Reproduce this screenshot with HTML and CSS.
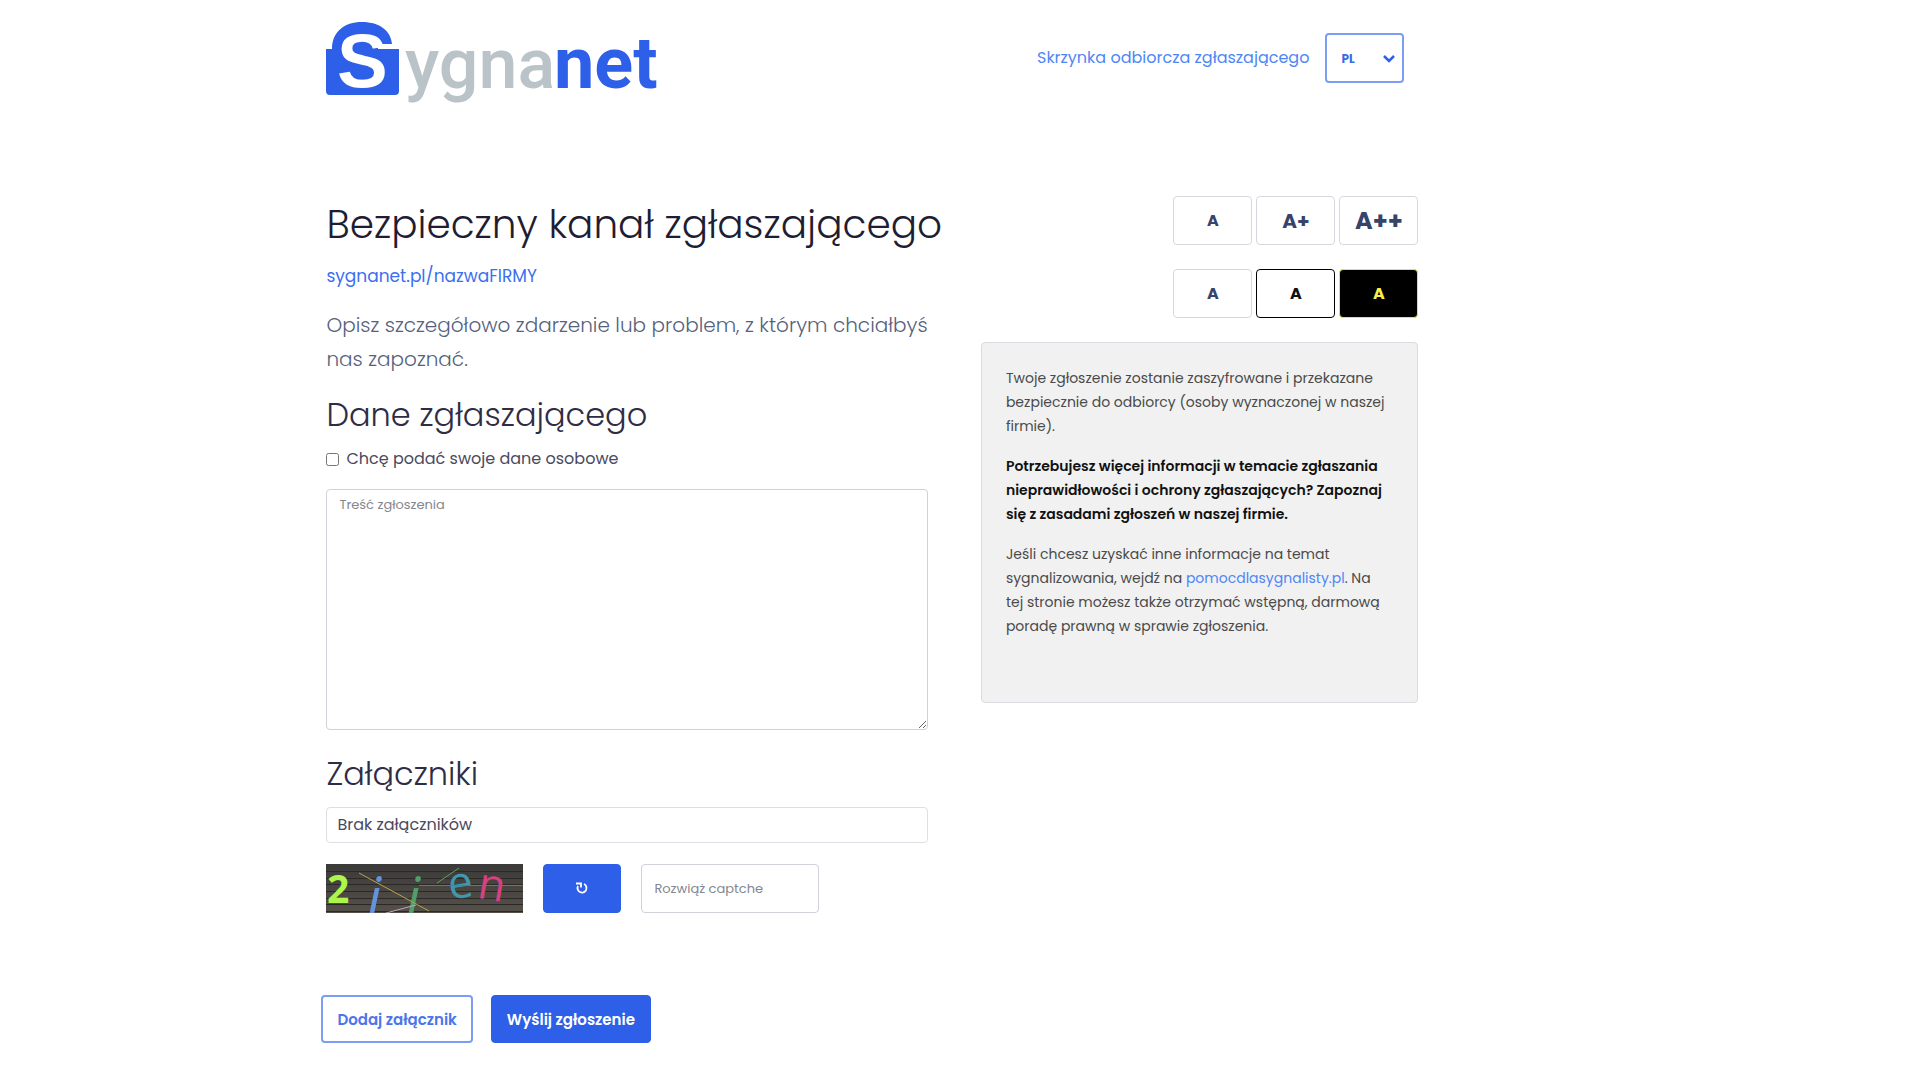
FILE: index.html
```html
<!DOCTYPE html>
<html lang="pl">
<head>
    <meta charset="UTF-8">
    <meta name="viewport" content="width=device-width, initial-scale=1.0">
    <title>Sygnanet - Bezpieczny kanał zgłaszającego</title>
    <link rel="stylesheet" href="styles.css">
</head>
<body>
    <div class="container">

        <header class="header">
            <a href="#" class="logo" aria-label="Sygnanet">
                <svg width="334" height="84" viewBox="0 0 334 84">
                    <path fill="#2d5fe8" d="M0 27h6C6 10 18 0 36 0s29 9 30 22H52v5h21v42q0 4-4 4H4q-4 0-4-4z"/>
                    <text class="logo-s" x="11" y="65">S</text>
                    <text class="logo-text" x="79" y="66">ygna</text>
                    <text class="logo-text logo-net" x="228" y="66">net</text>
                </svg>
            </a>
            <nav class="nav">
                <a href="#">Skrzynka odbiorcza zgłaszającego</a>
                <div class="lang">
                    <select aria-label="Język">
                        <option>PL</option>
                        <option>EN</option>
                    </select>
                    <svg class="chevron" width="12" height="8" viewBox="0 0 12 8"><path d="M1 1l5 5 5-5" fill="none" stroke="#2d5fe8" stroke-width="2.500"/></svg>
                </div>
            </nav>
        </header>

        <main class="main">
            <!-- Report form -->
            <form class="report">
                <h1>Bezpieczny kanał zgłaszającego</h1>
                <a href="#" class="company">sygnanet.pl/nazwaFIRMY</a>
                <p class="lead">Opisz szczegółowo zdarzenie lub problem, z którym chciałbyś nas zapoznać.</p>

                <h2>Dane zgłaszającego</h2>
                <div class="check">
                    <input type="checkbox" id="personal">
                    <label for="personal">Chcę podać swoje dane osobowe</label>
                </div>
                <textarea id="content" aria-label="Treść zgłoszenia" placeholder="Treść zgłoszenia"></textarea>

                <h2>Załączniki</h2>
                <div class="files">Brak załączników</div>

                <div class="captcha">
                    <svg class="captcha-img" width="197" height="49" viewBox="0 0 197 49">
                        <defs>
                            <linearGradient id="bg" x1="0" y1="0" x2="0" y2="1">
                                <stop offset="0" stop-color="#3b3a39"/>
                                <stop offset="1" stop-color="#565049"/>
                            </linearGradient>
                        </defs>
                        <rect width="197" height="49" fill="url(#bg)"/>
                        <path stroke="#2b2927" d="M0 7.500h197M0 14.500h197M0 20.500h197M0 27.500h197M0 34.500h197M0 40.500h197M0 47.500h197"/>
                        <text class="c-two" x="1" y="39">2</text>
                        <text class="c-i" x="41" y="54" fill="#6592dc">i</text>
                        <text class="c-i" x="80" y="54" fill="#4fa067">i</text>
                        <text class="c-e" x="122" y="34" transform="rotate(-8 134 21)">e</text>
                        <text class="c-n" x="152" y="36" transform="rotate(10 165 25)">n</text>
                        <path stroke="#b5a552" d="M33 9l70 38"/>
                        <path stroke="#4f8a5a" d="M93 21.500h104"/>
                        <path stroke="#6a9a5c" d="M111 19l22-15"/>
                        <path stroke="#c3a5c0" d="M60 49l30-8"/>
                    </svg>
                    <button type="button" class="btn refresh" aria-label="Odśwież">
                        <svg width="12" height="12" viewBox="0 0 12 12"><path d="M8 2a4.500 4.500 0 1 1-6 2M0 1.500h5v4" fill="none" stroke="#fff" stroke-width="1.800"/></svg>
                    </button>
                    <input type="text" aria-label="Rozwiąż captche" placeholder="Rozwiąż captche">
                </div>

                <div class="actions">
                    <button type="button" class="btn btn-outline">Dodaj załącznik</button>
                    <button type="submit" class="btn">Wyślij zgłoszenie</button>
                </div>
            </form>

            <!-- Accessibility and info -->
            <aside class="side">
                <div class="tools">
                    <button type="button">A</button>
                    <button type="button" class="size-m">A+</button>
                    <button type="button" class="size-l">A++</button>
                </div>
                <div class="tools">
                    <button type="button">A</button>
                    <button type="button" class="contrast-black">A</button>
                    <button type="button" class="contrast-yellow">A</button>
                </div>
                <div class="info">
                    <p>Twoje zgłoszenie zostanie zaszyfrowane i przekazane bezpiecznie do odbiorcy (osoby wyznaczonej w naszej firmie).</p>
                    <p class="strong">Potrzebujesz więcej informacji w temacie zgłaszania nieprawidłowości i ochrony zgłaszających? Zapoznaj się z zasadami zgłoszeń w naszej firmie.</p>
                    <p>Jeśli chcesz uzyskać inne informacje na temat sygnalizowania, wejdź na <a href="#">pomocdlasygnalisty.pl</a>. Na tej stronie możesz także otrzymać wstępną, darmową poradę prawną w sprawie zgłoszenia.</p>
                </div>
            </aside>
        </main>

    </div>
</body>
</html>
```
FILE: styles.css
```css
* {
    box-sizing: border-box;
}
body {
    margin: 0;
    background-color: #fff;
    color: #4a4a5e;
    font-family: Poppins, Inter, "Liberation Sans", sans-serif;
    font-size: 16px;
    line-height: 24px;
}
h1, h2, p {
    margin: 0;
}
a {
    color: #4e86f7;
    text-decoration: none;
}
button, input, select, textarea {
    font-family: inherit;
}
.container {
    max-width: 1092px;
    margin-left: 17%;
}

/* Header */
.header {
    display: flex;
    justify-content: space-between;
    align-items: flex-start;
    padding: 22px 14px 0 0;
    margin-bottom: 90px;
}
.logo svg {
    display: block;
    overflow: visible;
}
.logo-s {
    font-family: "Liberation Sans", sans-serif;
    font-size: 76px;
    font-weight: 700;
    fill: #fff;
}
.logo-text {
    font-family: Roboto, sans-serif;
    font-size: 70px;
    font-weight: 500;
    fill: #b9c3c8;
}
.logo-net {
    font-size: 72px;
    font-weight: 700;
    fill: #2d5fe8;
}
.nav {
    display: flex;
    align-items: center;
    gap: 16px;
    padding-top: 11px;
}
.lang {
    position: relative;
}
.lang select {
    appearance: none;
    width: 79px;
    height: 50px;
    padding: 0 14px;
    border: 2px solid #7b9df3;
    border-radius: 4px;
    background-color: #fff;
    color: #3b68e6;
    font-size: 12px;
    font-weight: 700;
}
.chevron {
    position: absolute;
    top: 22px;
    right: 9px;
    pointer-events: none;
}

/* Columns */
.main {
    display: grid;
    grid-template-columns: minmax(0, 55fr) minmax(0, 40fr);
    gap: 53px;
    padding-bottom: 36px;
}
h1 {
    color: #1f1d33;
    font-size: 39px;
    font-weight: 300;
    line-height: 58px;
    white-space: nowrap;
}
h2 {
    color: #2f2d45;
    font-size: 32px;
    font-weight: 300;
    line-height: 44px;
}
.company {
    display: block;
    margin: 10px 0 20px;
    color: #3b6ff0;
    font-size: 17px;
}
.lead {
    margin-bottom: 17px;
    color: #56617d;
    font-size: 20px;
    font-weight: 300;
    line-height: 34px;
}
.check {
    display: flex;
    align-items: center;
    gap: 7px;
    margin: 10px 0 18px;
}
.check input {
    width: 13px;
    height: 13px;
    margin: 0;
}
textarea {
    display: block;
    width: 100%;
    height: 241px;
    margin-bottom: 22px;
    padding: 6px 12px;
    border: 1px solid #cfd2d8;
    border-radius: 4px;
    font-size: 13px;
    line-height: 18px;
}
::placeholder {
    color: #85868f;
}
.files {
    margin: 11px 0 21px;
    padding: 5px 10px;
    border: 1px solid #dcdfe3;
    border-radius: 4px;
}

/* Captcha */
.captcha {
    display: flex;
    gap: 20px;
    margin-bottom: 82px;
}
.captcha input {
    width: 178px;
    height: 49px;
    padding: 0 12px;
    border: 1px solid #cfd2d8;
    border-radius: 4px;
    font-size: 13px;
}
.c-two {
    font-family: "Open Sans", sans-serif;
    font-size: 39px;
    font-weight: 700;
    fill: #adf54a;
}
.c-i {
    font-family: "Open Sans", sans-serif;
    font-size: 56px;
    font-style: italic;
}
.c-e, .c-n {
    font-family: "Open Sans", sans-serif;
    font-size: 44px;
    font-weight: 500;
    fill: #4197ac;
}
.c-n {
    fill: #d6427f;
}

/* Buttons */
.btn {
    height: 48px;
    padding: 0 15px;
    border: 1px solid #2d5fe8;
    border-radius: 4px;
    background-color: #2d5fe8;
    color: #fff;
    font-size: 15px;
    font-weight: 600;
    cursor: pointer;
}
.btn-outline {
    padding: 0 14px;
    border: 2px solid #7b9df3;
    background-color: #fff;
    color: #4a76ea;
}
.refresh {
    width: 78px;
    height: 49px;
}
.actions {
    display: flex;
    gap: 18px;
    margin-left: -5px;
}

/* Right column */
.tools {
    display: flex;
    justify-content: flex-end;
    gap: 4px;
    margin-bottom: 24px;
}
.tools button {
    width: 79px;
    height: 49px;
    padding: 0;
    border: 1px solid #d5d9df;
    border-radius: 4px;
    background-color: #fff;
    color: #36446a;
    font-size: 16px;
    font-weight: 700;
    cursor: pointer;
}
.tools .size-m {
    font-size: 20px;
}
.tools .size-l {
    font-size: 24px;
}
.tools .contrast-black {
    border-color: #000;
    color: #111;
}
.tools .contrast-yellow {
    border-color: #e8e63a;
    background-color: #000;
    color: #f5f34a;
}
.info {
    min-height: 361px;
    padding: 23px 30px 23px 24px;
    border: 1px solid #d9dde1;
    border-radius: 4px;
    background-color: #f1f1f1;
    color: #4a4a4a;
    font-size: 14px;
}
.info p {
    margin-bottom: 16px;
}
.info .strong {
    color: #111;
    font-weight: 600;
}
```
